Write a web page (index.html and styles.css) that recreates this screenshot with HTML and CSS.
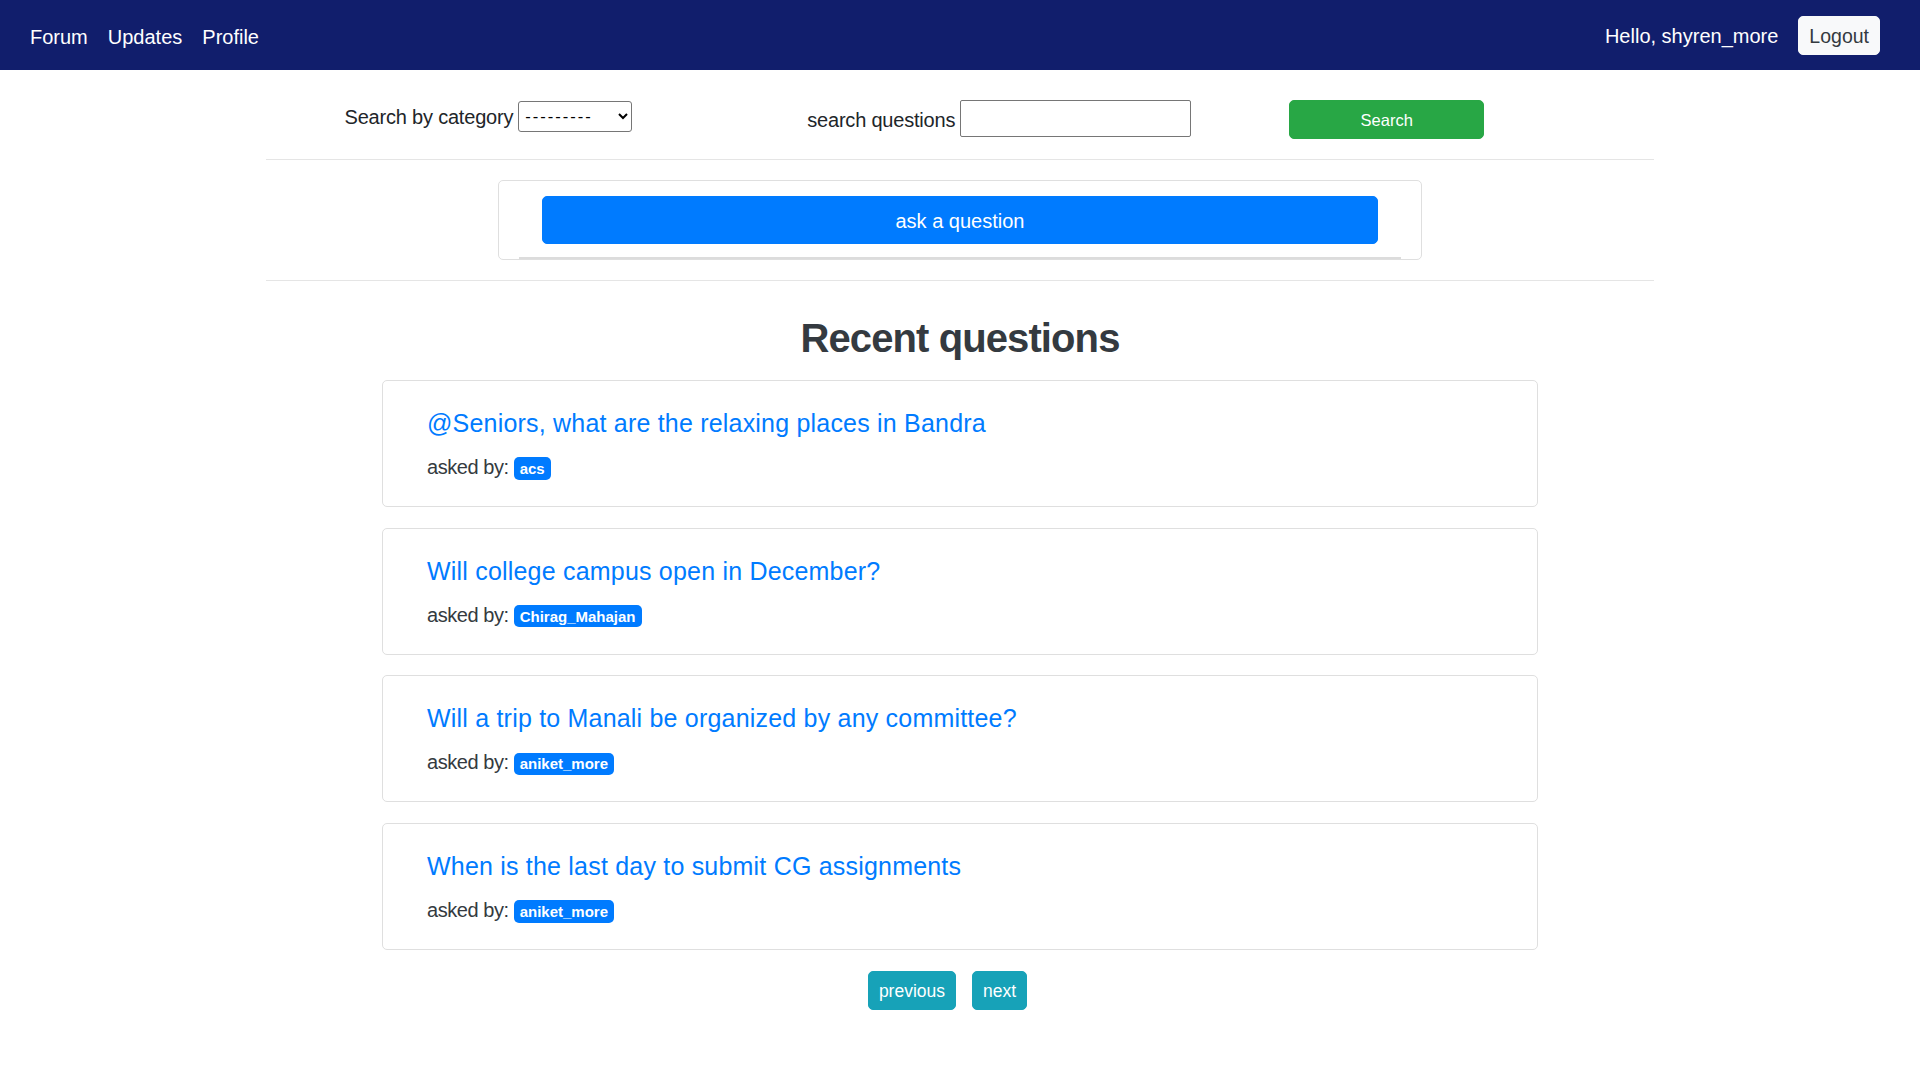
FILE: index.html
```html
<!DOCTYPE html>
<html lang="en">
<head>
<meta charset="utf-8">
<title>Forum</title>
<link rel="stylesheet" href="styles.css">
</head>
<body>
<nav class="navbar">
  <div class="nav-left">
    <a class="nav-link" href="#">Forum</a>
    <a class="nav-link" href="#">Updates</a>
    <a class="nav-link" href="#">Profile</a>
  </div>
  <div class="nav-right">
    <span class="nav-text">Hello, shyren_more</span>
    <button class="btn-logout" type="button">Logout</button>
  </div>
</nav>

<main class="container">
  <form class="search-row">
    <div class="search-group">
      <label class="search-label" for="cat">Search by category</label>
      <select class="cat-select" id="cat"><option>---------</option></select>
    </div>
    <div class="search-group">
      <label class="search-label" for="q">search questions</label>
      <input class="q-input" id="q" type="text">
    </div>
    <div class="spacer"></div>
    <button class="btn-search" type="button">Search</button>
  </form>

  <hr class="divider">

  <div class="ask-card">
    <div class="ask-inner">
      <button class="btn-ask" type="button">ask a question</button>
    </div>
  </div>

  <hr class="divider">

  <h2 class="section-title">Recent questions</h2>

  <div class="q-list">
    <div class="q-card">
      <h5 class="q-title"><a href="#">@Seniors, what are the relaxing places in Bandra</a></h5>
      <p class="q-meta">asked by: <span class="badge">acs</span></p>
    </div>
    <div class="q-card">
      <h5 class="q-title"><a href="#">Will college campus open in December?</a></h5>
      <p class="q-meta">asked by: <span class="badge">Chirag_Mahajan</span></p>
    </div>
    <div class="q-card">
      <h5 class="q-title"><a href="#">Will a trip to Manali be organized by any committee?</a></h5>
      <p class="q-meta">asked by: <span class="badge">aniket_more</span></p>
    </div>
    <div class="q-card">
      <h5 class="q-title"><a href="#">When is the last day to submit CG assignments</a></h5>
      <p class="q-meta">asked by: <span class="badge">aniket_more</span></p>
    </div>
  </div>

  <div class="pager">
    <a class="btn-page" href="#">previous</a>
    <a class="btn-page" href="#">next</a>
  </div>
</main>
</body>
</html>
```

FILE: styles.css
```css
* { box-sizing: border-box; }

html, body { margin: 0; padding: 0; }

body {
  font-family: "Segoe UI", "Liberation Sans", Arial, sans-serif;
  font-size: 20px;
  line-height: 1.5;
  color: #212529;
  background: #fff;
}

a { text-decoration: none; }

/* Navbar */
.navbar {
  height: 70px;
  background: #111e6c;
  display: flex;
  align-items: center;
  justify-content: space-between;
  padding: 0 20px;
}
.nav-left { display: flex; }
.nav-link {
  color: #fff;
  padding: 12px 10px 8px;
  line-height: 30px;
}
.nav-right {
  display: flex;
  align-items: center;
  margin-right: 20px;
}
.nav-text {
  color: #fff;
  line-height: 30px;
  padding-top: 2px;
}
.btn-logout {
  margin-left: 20px;
  font-family: inherit;
  font-size: 19.5px;
  line-height: 27px;
  padding: 6px 10px 4px;
  border: 1px solid #f8f9fa;
  border-radius: 5px;
  background: #f8f9fa;
  color: #343a40;
  height: 39px;
}

/* Container */
.container {
  width: 1425px;
  margin: 0 auto;
  padding: 0 18.75px;
}

/* Search row */
.search-row {
  margin-top: 30px;
  display: grid;
  grid-template-columns: 366px 559px 98px 195px;
  align-items: start;
}
.search-group {
  display: flex;
  align-items: center;
  justify-content: flex-end;
}
.search-label {
  color: #212529;
  margin-right: 5px;
  white-space: nowrap;
  letter-spacing: -0.2px;
  padding-top: 2px;
}
.cat-select {
  width: 114px;
  height: 31px;
  font-family: inherit;
  font-size: 16.5px;
  letter-spacing: 2px;
  border: 1px solid #767676;
  border-radius: 3px;
  background: #fff;
  color: #000;
  padding: 0 2px;
}
.q-input {
  width: 231px;
  height: 37px;
  border: 1px solid #767676;
  border-radius: 2px;
  font-family: inherit;
  font-size: 16.5px;
  padding: 1px 3px;
}
.btn-search {
  width: 195px;
  height: 39px;
  background: #28a745;
  border: 1px solid #28a745;
  border-radius: 5px;
  color: #fff;
  font-family: inherit;
  font-size: 16.5px;
  line-height: 26px;
  padding: 6px 10px 5px;
}

.divider {
  border: 0;
  border-top: 1px solid rgba(0, 0, 0, 0.1);
  margin: 20px 0;
  height: 0;
}

/* Ask card */
.ask-card {
  width: 924px;
  margin: 0 auto;
  border: 1px solid #dfdfdf;
  border-radius: 5px;
  padding: 15px 20px 0;
}
.ask-inner {
  padding: 0 23px 13px;
  border-bottom: 2px solid #dcdcdc;
}
.btn-ask {
  display: block;
  width: 100%;
  height: 48px;
  background: #007bff;
  border: 1px solid #007bff;
  border-radius: 5px;
  color: #fff;
  font-family: inherit;
  font-size: 20px;
  line-height: 30px;
  padding-top: 3px;
}

/* Section title */
.section-title {
  text-align: center;
  font-size: 40px;
  line-height: 48px;
  font-weight: 700;
  color: #343a40;
  letter-spacing: -0.9px;
  margin: 33px 0 18px;
}

/* Question cards */
.q-list {
  width: 1156px;
  margin: 0 auto;
}
.q-card {
  border: 1px solid #dfdfdf;
  border-radius: 5px;
  padding: 27px 44px 24px;
  margin-bottom: 20.7px;
}
.q-title {
  margin: 0 0 14px;
  font-size: 25px;
  line-height: 30px;
  font-weight: 400;
  letter-spacing: 0.2px;
}
.q-title a { color: #007bff; }
.q-meta {
  margin: 0;
  color: #343a40;
  line-height: 30px;
  letter-spacing: -0.45px;
}
.badge {
  display: inline-block;
  background: #007bff;
  color: #fff;
  font-size: 15px;
  font-weight: 700;
  line-height: 1;
  letter-spacing: 0;
  padding: 3.75px 6px;
  border-radius: 5px;
  vertical-align: baseline;
}

/* Pager */
.pager {
  display: flex;
  justify-content: center;
  gap: 16px;
  padding-right: 25px;
}
.btn-page {
  display: inline-block;
  background: #17a2b8;
  border: 1px solid #17a2b8;
  color: #fff;
  font-size: 17.5px;
  line-height: 27px;
  padding: 6px 10px 4px;
  border-radius: 5px;
}
```
